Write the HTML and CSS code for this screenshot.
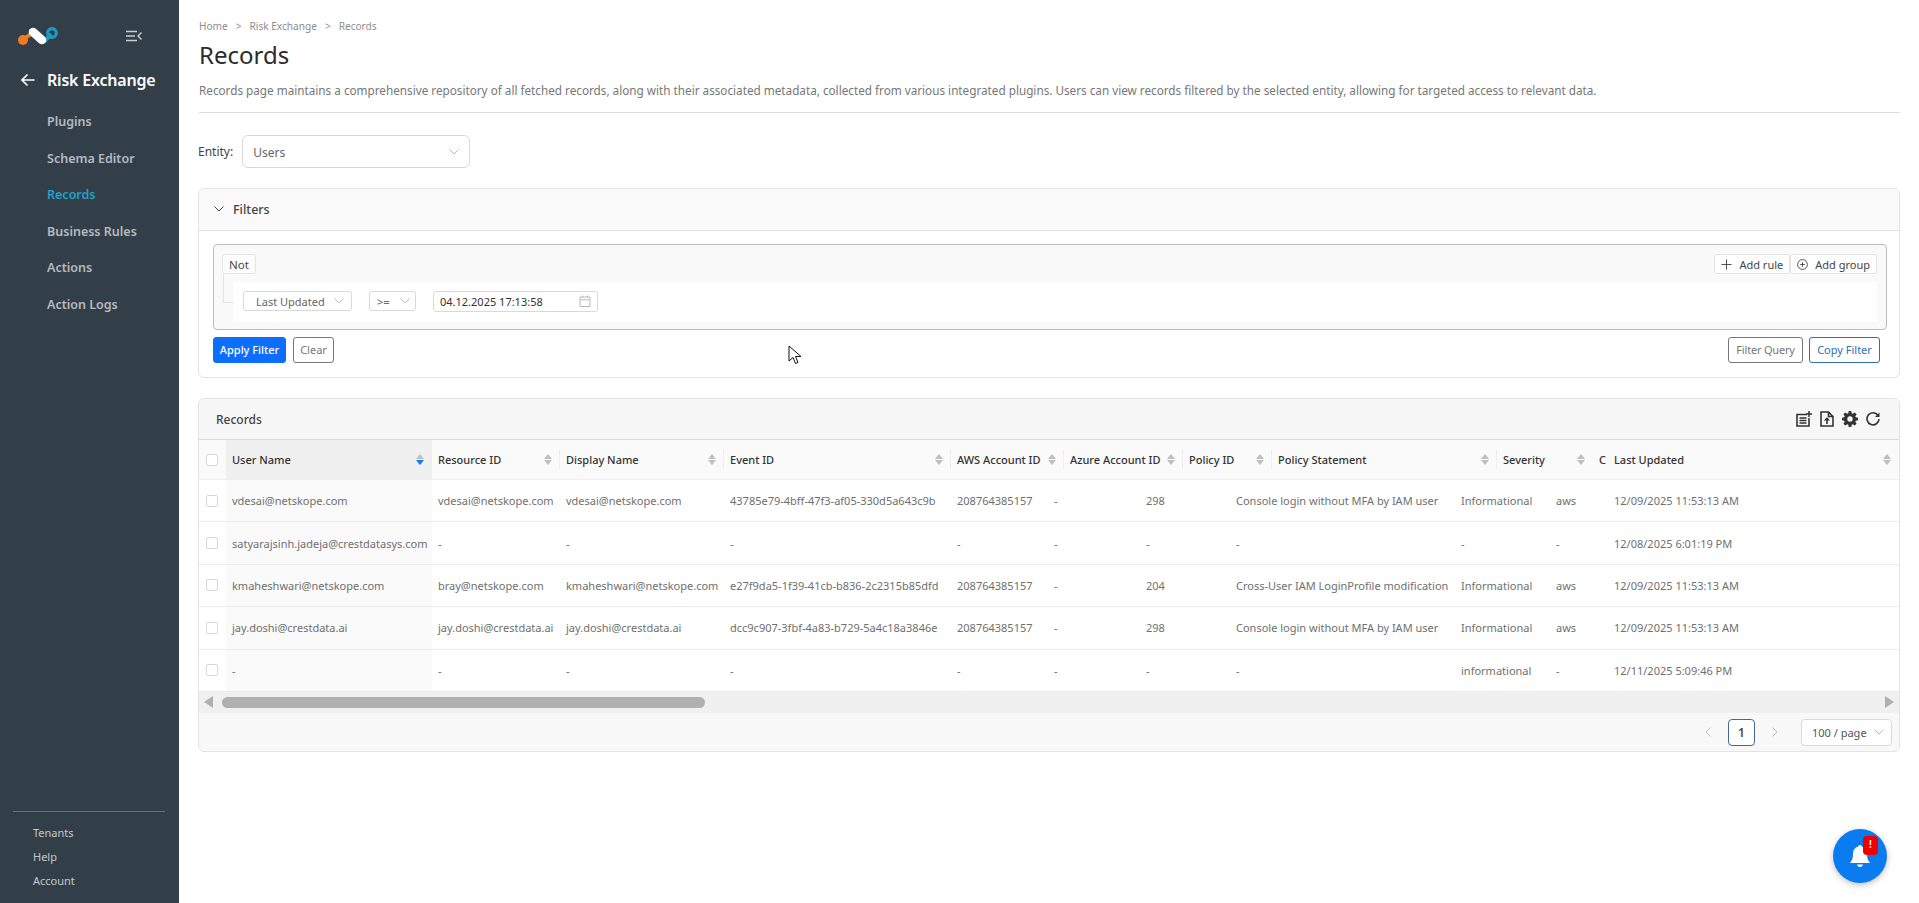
FILE: index.html
```html
<!DOCTYPE html>
<html lang="en">
<head>
  <meta charset="UTF-8">
  <title>Records</title>
  <link rel="stylesheet" href="styles.css">
</head>
<body>

<!-- Sidebar -->
<aside class="sidebar">
  <div class="brand">
    <svg class="logo" viewBox="0 0 42 24" width="42" height="24">
      <path d="M6 14 L15 7" stroke="#f47b20" stroke-width="4" stroke-linecap="round"/>
      <circle cx="6" cy="14" r="5" fill="#f47b20"/>
      <path d="M28 15 L33 9" stroke="#1b9cc4" stroke-width="4" stroke-linecap="round"/>
      <circle cx="35" cy="7" r="4.300" fill="none" stroke="#1b9cc4" stroke-width="3.200"/>
      <path d="M16 6 L25 14" stroke="#fff" stroke-width="8.500" stroke-linecap="round"/>
    </svg>
    <svg class="collapse" viewBox="0 0 16 12" width="16" height="12">
      <path d="M0 1.500h11M0 6h9M0 10.500h11" stroke="#c9ced2" stroke-width="1.400"/>
      <path d="M15.500 2.500 12 6l3.500 3.500" stroke="#c9ced2" stroke-width="1.400" fill="none"/>
    </svg>
  </div>
  <div class="module">
    <svg viewBox="0 0 14 14" width="14" height="14"><path d="M13.500 7H1.500M6.500 1.500 1 7l5.500 5.500" stroke="#fff" stroke-width="1.600" fill="none"/></svg>
    <span>Risk Exchange</span>
  </div>
  <nav class="nav">
    <a>Plugins</a>
    <a>Schema Editor</a>
    <a class="active">Records</a>
    <a>Business Rules</a>
    <a>Actions</a>
    <a>Action Logs</a>
  </nav>
  <div class="side-footer">
    <a>Tenants</a>
    <a>Help</a>
    <a>Account</a>
  </div>
</aside>

<main class="main">
  <div class="crumbs"><span>Home</span><i>&gt;</i><span>Risk Exchange</span><i>&gt;</i><span>Records</span></div>
  <h1>Records</h1>
  <p class="intro">Records page maintains a comprehensive repository of all fetched records, along with their associated metadata, collected from various integrated plugins. Users can view records filtered by the selected entity, allowing for targeted access to relevant data.</p>

  <div class="entity">
    <label>Entity:</label>
    <div class="select entity-select">Users
      <svg class="chev" viewBox="0 0 10 6" width="10" height="6"><path d="M.5.500 5 5 9.500.500" /></svg>
    </div>
  </div>

  <!-- Filters -->
  <section class="card filters">
    <div class="filters-head">
      <svg viewBox="0 0 10 6" width="10" height="6"><path d="M.5.500 5 5 9.500.500" fill="none" stroke="#444"/></svg>
      <span>Filters</span>
    </div>
    <div class="filters-body">
      <div class="query">
        <div class="query-top">
          <button class="mini not">Not</button>
          <div class="adders">
            <button class="mini"><svg viewBox="0 0 12 12" width="11" height="11"><path d="M6 .5v11M.5 6h11" stroke="#444" fill="none"/></svg>Add rule</button>
            <button class="mini"><svg viewBox="0 0 12 12" width="11" height="11"><circle cx="6" cy="6" r="5.300" stroke="#444" fill="none"/><path d="M6 3.500v5M3.500 6h5" stroke="#444"/></svg>Add group</button>
          </div>
        </div>
        <div class="rule">
          <div class="select field">Last Updated
            <svg class="chev" viewBox="0 0 10 6" width="10" height="6"><path d="M.5.500 5 5 9.500.500" /></svg>
          </div>
          <div class="select op">&gt;=
            <svg class="chev" viewBox="0 0 10 6" width="10" height="6"><path d="M.5.500 5 5 9.500.500" /></svg>
          </div>
          <div class="select date">04.12.2025 17:13:58
            <svg viewBox="0 0 12 12" width="12" height="12"><path d="M1 2h10v9.500H1zM1 4.800h10M3.500.5v2M8.500.5v2" stroke="#bbb" fill="none"/></svg>
          </div>
        </div>
      </div>
      <div class="filter-actions">
        <div class="btn-group">
          <button class="btn primary apply">Apply Filter</button>
          <button class="btn clear">Clear</button>
        </div>
        <div class="btn-group">
          <button class="btn query-btn">Filter Query</button>
          <button class="btn outline">Copy Filter</button>
        </div>
      </div>
    </div>
  </section>

  <!-- Records table -->
  <section class="card records">
    <div class="records-head">
      <span>Records</span>
      <div class="tools">
        <svg viewBox="0 0 16 16" width="16" height="16"><path d="M11 3.500H1v11.500h12V7" fill="none" stroke="#333" stroke-width="1.600"/><path d="M3.500 7h7M3.500 9.500h7M3.500 12h7M13 0v6M10 3h6" stroke="#333" stroke-width="1.500"/></svg>
        <svg viewBox="0 0 14 16" width="14" height="16"><path d="M8.500 1H1v14h12V5.500zM8.500 1v4.500H13" fill="none" stroke="#333" stroke-width="1.600"/><path d="M7 13V8" fill="none" stroke="#333" stroke-width="1.600"/><path d="M3.800 9.500 7 6.300l3.200 3.200z" fill="#333"/></svg>
        <svg viewBox="0 0 16 16" width="16" height="16"><path fill="#333" fill-rule="evenodd" d="M6.700 0h2.600l.4 2.200 1.100.5L12.700 1.400l1.900 1.900-1.300 1.900.5 1.100 2.200.4v2.600l-2.200.4-.5 1.100 1.300 1.900-1.900 1.900-1.900-1.300-1.100.5-.4 2.200H6.700l-.4-2.200-1.100-.5-1.900 1.300-1.900-1.900 1.300-1.900-.5-1.100L0 9.300V6.700l2.200-.4.500-1.100L1.400 3.300l1.900-1.900 1.900 1.300 1.100-.5zM8 5.300a2.700 2.700 0 1 0 0 5.400 2.700 2.700 0 0 0 0-5.400z"/></svg>
        <svg viewBox="0 0 14 14" width="14" height="14"><path d="M12 3.500A6 6 0 1 0 13 7" fill="none" stroke="#333" stroke-width="1.600"/><path d="M13.500.5v4.500H9z" fill="#333"/></svg>
      </div>
    </div>

    <div class="table">
      <div class="head-row">
        <div class="hcell check"><span class="box"></span></div>
        <div class="hcell sorted">User Name<span class="sort on"></span></div>
        <div class="hcell">Resource ID<span class="sort"></span></div>
        <div class="hcell">Display Name<span class="sort"></span></div>
        <div class="hcell">Event ID<span class="sort"></span></div>
        <div class="hcell">AWS Account ID<span class="sort"></span></div>
        <div class="hcell">Azure Account ID<span class="sort"></span></div>
        <div class="hcell">Policy ID<span class="sort"></span></div>
        <div class="hcell">Policy Statement<span class="sort"></span></div>
        <div class="hcell">Severity<span class="sort"></span></div>
        <div class="hcell clip">C</div>
        <div class="hcell fixed">Last Updated<span class="sort"></span></div>
      </div>

      <div class="row">
        <div class="cell check"><span class="box"></span></div>
        <div class="cell sorted">vdesai@netskope.com</div>
        <div class="cell">vdesai@netskope.com</div>
        <div class="cell">vdesai@netskope.com</div>
        <div class="cell">43785e79-4bff-47f3-af05-330d5a643c9b</div>
        <div class="cell">208764385157</div>
        <div class="cell">-</div>
        <div class="cell">298</div>
        <div class="cell">Console login without MFA by IAM user</div>
        <div class="cell">Informational</div>
        <div class="cell">aws</div>
        <div class="cell fixed">12/09/2025 11:53:13 AM</div>
      </div>
      <div class="row">
        <div class="cell check"><span class="box"></span></div>
        <div class="cell sorted">satyarajsinh.jadeja@crestdatasys.com</div>
        <div class="cell">-</div>
        <div class="cell">-</div>
        <div class="cell">-</div>
        <div class="cell">-</div>
        <div class="cell">-</div>
        <div class="cell">-</div>
        <div class="cell">-</div>
        <div class="cell">-</div>
        <div class="cell">-</div>
        <div class="cell fixed">12/08/2025 6:01:19 PM</div>
      </div>
      <div class="row">
        <div class="cell check"><span class="box"></span></div>
        <div class="cell sorted">kmaheshwari@netskope.com</div>
        <div class="cell">bray@netskope.com</div>
        <div class="cell">kmaheshwari@netskope.com</div>
        <div class="cell">e27f9da5-1f39-41cb-b836-2c2315b85dfd</div>
        <div class="cell">208764385157</div>
        <div class="cell">-</div>
        <div class="cell">204</div>
        <div class="cell">Cross-User IAM LoginProfile modification</div>
        <div class="cell">Informational</div>
        <div class="cell">aws</div>
        <div class="cell fixed">12/09/2025 11:53:13 AM</div>
      </div>
      <div class="row">
        <div class="cell check"><span class="box"></span></div>
        <div class="cell sorted">jay.doshi@crestdata.ai</div>
        <div class="cell">jay.doshi@crestdata.ai</div>
        <div class="cell">jay.doshi@crestdata.ai</div>
        <div class="cell">dcc9c907-3fbf-4a83-b729-5a4c18a3846e</div>
        <div class="cell">208764385157</div>
        <div class="cell">-</div>
        <div class="cell">298</div>
        <div class="cell">Console login without MFA by IAM user</div>
        <div class="cell">Informational</div>
        <div class="cell">aws</div>
        <div class="cell fixed">12/09/2025 11:53:13 AM</div>
      </div>
      <div class="row">
        <div class="cell check"><span class="box"></span></div>
        <div class="cell sorted">-</div>
        <div class="cell">-</div>
        <div class="cell">-</div>
        <div class="cell">-</div>
        <div class="cell">-</div>
        <div class="cell">-</div>
        <div class="cell">-</div>
        <div class="cell">-</div>
        <div class="cell">informational</div>
        <div class="cell">-</div>
        <div class="cell fixed">12/11/2025 5:09:46 PM</div>
      </div>

      <div class="hscroll">
        <span class="arrow left"></span>
        <div class="track"><div class="thumb"></div></div>
        <span class="arrow right"></span>
      </div>
    </div>

    <div class="pager">
      <svg viewBox="0 0 6 10" width="6" height="10"><path d="M5.500.5 1 5l4.500 4.500" fill="none" stroke="#bbb"/></svg>
      <span class="page">1</span>
      <svg viewBox="0 0 6 10" width="6" height="10"><path d="M.5.500 5 5 .5 9.500" fill="none" stroke="#bbb"/></svg>
      <div class="select per-page">100 / page
        <svg class="chev" viewBox="0 0 10 6" width="10" height="6"><path d="M.5.500 5 5 9.500.500" /></svg>
      </div>
    </div>
  </section>
</main>

<!-- Notification button -->
<button class="notify">
  <svg viewBox="0 0 22 26" width="22" height="26"><path fill="#fff" d="M11 2c1 0 1.700.7 1.800 1.600C16 4.500 18 7.300 18 10.500c0 4.500.8 7 3 9.500H1c2.200-2.500 3-5 3-9.500 0-3.200 2-6 5.200-6.900C9.300 2.700 10 2 11 2zM8 21.500h6c-.3 1.500-1.500 2.500-3 2.500s-2.700-1-3-2.500z"/></svg>
  <span class="badge">!</span>
</button>

<!-- Mouse pointer -->
<svg class="pointer" viewBox="0 0 14 20" width="14" height="20"><path d="M1 1v15l4-3.500 2.500 6 2.500-1-2.500-6H13z" fill="#fff" stroke="#111"/></svg>

</body>
</html>
```

FILE: styles.css
```css
* {
  box-sizing: border-box;
}

body {
  margin: 0;
  height: 903px;
  overflow: hidden;
  display: flex;
  background: #fff;
  color: #333;
  font-family: "Noto Sans", Arial, sans-serif;
  font-size: 11px;
}

.sidebar {
  width: 179px;
  flex-shrink: 0;
  height: 903px;
  background: #333f48;
  display: flex;
  flex-direction: column;
  padding-top: 26px;
}

.brand {
  display: flex;
  align-items: center;
  justify-content: space-between;
  padding: 0 37px 0 17px;
  height: 24px;
}

.collapse {
  margin-bottom: 4px;
}

.module {
  display: flex;
  align-items: center;
  gap: 12px;
  margin-top: 18px;
  padding-left: 21px;
  height: 24px;
  color: #fff;
  font-size: 16px;
  font-weight: 600;
  letter-spacing: -0.2px;
}

.nav {
  margin-top: 12px;
  display: flex;
  flex-direction: column;
}

.nav a {
  height: 36.6px;
  line-height: 36.6px;
  padding-left: 47px;
  color: #b4bac0;
  font-size: 12.5px;
  font-weight: 600;
}

.nav a.active {
  color: #1fa3c9;
}

.side-footer {
  margin: auto 14px 0 13px;
  padding: 9px 0 10px 20px;
  border-top: 1px solid #66717a;
  display: flex;
  flex-direction: column;
}

.side-footer a {
  height: 24px;
  line-height: 24px;
  color: #c3c8cc;
  font-size: 11px;
}

.main {
  flex: 1;
  min-width: 0;
  padding: 16px 19px 0 20px;
}

.crumbs {
  display: flex;
  gap: 8px;
  height: 20px;
  line-height: 20px;
  font-size: 10.1px;
  color: #8c8c8c;
}

.crumbs i {
  font-style: normal;
}

h1 {
  margin: 0;
  height: 38px;
  line-height: 38px;
  font-size: 24px;
  font-weight: 400;
  color: #2b2b2b;
}

.intro {
  margin: 0;
  height: 39px;
  padding-top: 7px;
  line-height: 18px;
  font-size: 11.72px;
  color: #777;
  border-bottom: 1px solid #ddd;
  white-space: nowrap;
}

.entity {
  display: flex;
  align-items: center;
  gap: 9px;
  margin-top: 22px;
  margin-left: -1px;
  font-size: 12px;
  color: #444;
}

.select {
  display: flex;
  align-items: center;
  justify-content: space-between;
  background: #fff;
  border: 1px solid #d9d9d9;
  border-radius: 3px;
  color: #666;
}

.chev {
  fill: none;
  stroke: #bbb;
}

.entity-select {
  width: 228px;
  height: 33px;
  padding: 1px 10px 0;
  border-radius: 6px;
}

.card {
  margin-left: -1px;
  border: 1px solid #e3e3e3;
  border-radius: 6px;
  overflow: hidden;
}

.filters {
  margin-top: 20px;
  height: 190px;
}

.filters-head {
  display: flex;
  align-items: center;
  gap: 9px;
  height: 42px;
  padding: 0 15px 1px;
  background: #fafafa;
  border-bottom: 1px solid #e3e3e3;
  color: #444;
  font-size: 12.5px;
  font-weight: 500;
}

.filters-body {
  padding: 13px 12px 0 14px;
}

.query {
  height: 86px;
  background: #f9f9f9;
  border: 1px solid #bdbdbd;
  border-radius: 4px;
  padding: 9px 9px 0 8px;
}

.query-top {
  display: flex;
  justify-content: space-between;
}

.adders {
  display: flex;
}

.mini {
  display: flex;
  align-items: center;
  gap: 7px;
  height: 20px;
  padding: 0 6px;
  background: #fff;
  border: 1px solid #e3e3e3;
  border-radius: 3px;
  font: inherit;
  color: #444;
}

.mini.not {
  font-size: 11.5px;
}

.rule {
  position: relative;
  display: flex;
  align-items: center;
  height: 40px;
  margin: 8px 0 0 11px;
  padding: 0 0 2px 10px;
  background: #fff;
}

.rule::before {
  content: "";
  position: absolute;
  left: -10px;
  top: -8px;
  width: 10px;
  height: 28px;
  border-left: 1px solid #e3e3e3;
  border-bottom: 1px solid #e3e3e3;
}

.field {
  width: 109px;
  height: 20px;
  padding: 0 7px 0 12px;
}

.op {
  width: 47px;
  height: 20px;
  margin-left: 17px;
  padding: 0 5px 0 7px;
}

.date {
  width: 165px;
  height: 21px;
  margin-left: 17px;
  padding: 0 6px;
  color: #333;
}

.filter-actions {
  display: flex;
  justify-content: space-between;
  margin-top: 7px;
  padding-right: 7px;
}

.btn-group {
  display: flex;
  gap: 7px;
}

.btn {
  height: 26px;
  padding: 0 0 2px;
  background: #fff;
  border: 1px solid #777;
  border-radius: 3px;
  font: inherit;
  color: #777;
}

.btn.apply {
  width: 73px;
}

.btn.clear {
  width: 41px;
}

.btn.query-btn {
  width: 75px;
  letter-spacing: -0.2px;
}

.btn.outline {
  width: 71px;
  margin-left: -1px;
  border-color: #2f6fb3;
  color: #2f6fb3;
}

.btn.primary {
  background: #0d6efd;
  border-color: #0d6efd;
  color: #fff;
  font-weight: 500;
}

.records {
  margin-top: 20px;
  height: 354px;
  background: #f8f8f8;
}

.records-head {
  display: flex;
  align-items: center;
  justify-content: space-between;
  height: 41px;
  padding: 0 19px 0 17px;
  background: #f7f7f7;
  border-bottom: 1px solid #dcdcdc;
  color: #444;
  font-size: 12px;
  font-weight: 500;
}

.tools {
  display: flex;
  align-items: center;
  gap: 8px;
}

.head-row,
.row {
  display: grid;
}

.head-row {
  grid-template-columns: 27px 206px 128px 164px 227px 113px 119px 89px 225px 96px 15px 1fr;
  height: 40px;
  background: #fafafa;
}

.row {
  grid-template-columns: 27px 206px 128px 164px 227px 97px 92px 90px 225px 95px 58px 1fr;
  height: 42.4px;
  background: #fff;
}

.hcell,
.cell {
  display: flex;
  align-items: center;
  min-width: 0;
  padding: 0 6px;
  white-space: nowrap;
}

.hcell {
  position: relative;
  color: #333;
  font-weight: 500;
  border-bottom: 1px solid #f0f0f0;
}

.hcell::before {
  content: "";
  position: absolute;
  left: -1px;
  top: 10px;
  bottom: 10px;
  border-left: 1px solid #eee;
}

.cell {
  color: #6f6f6f;
  border-bottom: 1px solid #ececec;
}

.check {
  padding: 0 0 0 7px;
}

.hcell.check::before,
.hcell.sorted::before,
.hcell.fixed::before {
  display: none;
}

.box {
  width: 12px;
  height: 12px;
  background: #fff;
  border: 1px solid #d9d9d9;
  border-radius: 2px;
}

.hcell.sorted {
  background: #f0f0f0;
}

.cell.sorted {
  background: #fafafa;
}

.clip {
  overflow: hidden;
  padding: 0 0 0 6px;
}

.sort {
  position: absolute;
  right: 8px;
  top: 50%;
  width: 8px;
  height: 11px;
  margin-top: -6px;
}

.sort::before,
.sort::after {
  content: "";
  position: absolute;
  left: 0;
  border-left: 4px solid transparent;
  border-right: 4px solid transparent;
}

.sort::before {
  top: 0;
  border-bottom: 5px solid #bfbfbf;
}

.sort::after {
  bottom: 0;
  border-top: 5px solid #bfbfbf;
}

.sort.on::after {
  border-top-color: #1677ff;
}

.hscroll {
  display: flex;
  align-items: center;
  height: 21px;
  padding: 0 5px;
  background: #f0f0f0;
}

.track {
  flex: 1;
  height: 11px;
  padding-left: 9px;
}

.thumb {
  width: 483px;
  height: 11px;
  background: #b0b0b0;
  border-radius: 6px;
}

.arrow {
  width: 0;
  height: 0;
  border-top: 6px solid transparent;
  border-bottom: 6px solid transparent;
}

.arrow.left {
  border-right: 9px solid #b0b0b0;
}

.arrow.right {
  border-left: 9px solid #b0b0b0;
}

.pager {
  display: flex;
  align-items: center;
  justify-content: flex-end;
  gap: 17px;
  height: 39px;
  padding-right: 7px;
  background: #f8f8f8;
}

.page {
  width: 27px;
  height: 27px;
  line-height: 25px;
  text-align: center;
  background: #fff;
  border: 1px solid #44688f;
  border-radius: 4px;
  font-size: 12px;
  color: #5a3d33;
  font-weight: 600;
}

.per-page {
  width: 91px;
  height: 27px;
  margin-left: 6px;
  padding: 0 7px 0 10px;
  border-radius: 4px;
  color: #555;
}

.notify {
  position: absolute;
  left: 1833px;
  top: 829px;
  width: 54px;
  height: 54px;
  padding: 0;
  display: flex;
  align-items: center;
  justify-content: center;
  background: #0a7cf0;
  border: none;
  border-radius: 50%;
  box-shadow: 0 2px 6px rgba(0, 0, 0, 0.25);
}

.badge {
  position: absolute;
  left: 30px;
  top: 7px;
  width: 15px;
  height: 19px;
  line-height: 17px;
  text-align: center;
  background: #f00000;
  border-radius: 4px;
  color: #fff;
  font-size: 10px;
  font-weight: 700;
}

.pointer {
  position: absolute;
  left: 788px;
  top: 345px;
}
```
